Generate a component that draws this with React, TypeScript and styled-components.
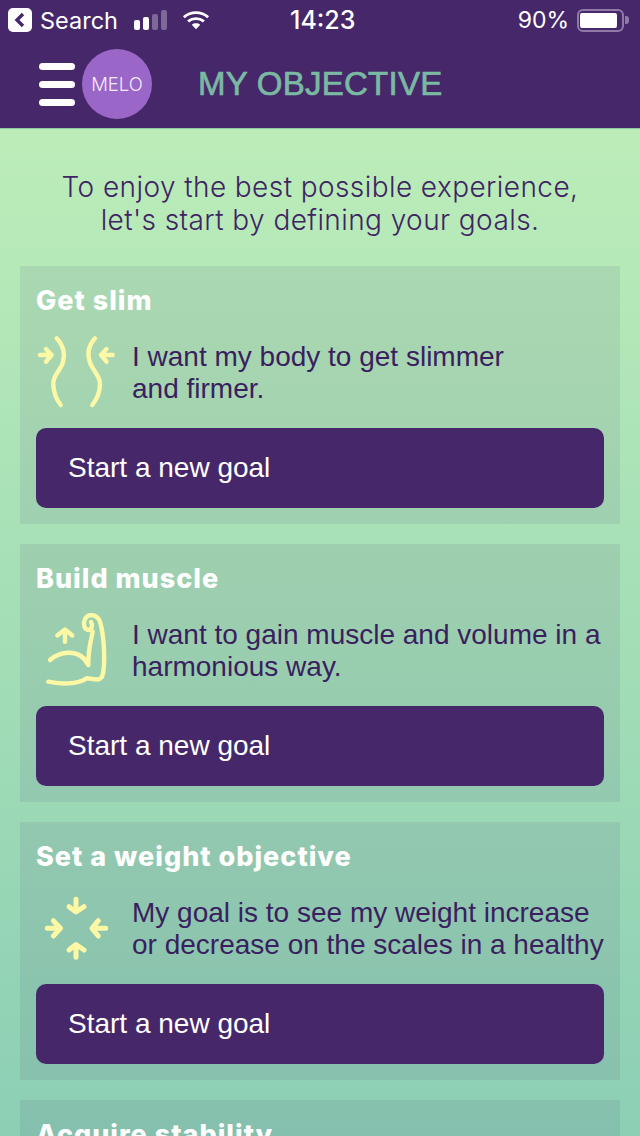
import { createGlobalStyle, styled } from "styled-components";

const GlobalStyle = createGlobalStyle`
  html, body {
    margin: 0;
    padding: 0;
    height: 1136px;
    overflow: hidden;
  }
  * { box-sizing: border-box; }
`;

const goals = [
  {
    title: "Get slim",
    text: ["I want my body to get slimmer", "and firmer."],
    icon: "slim",
  },
  {
    title: "Build muscle",
    text: ["I want to gain muscle and volume in a", "harmonious way."],
    icon: "muscle",
  },
  {
    title: "Set a weight objective",
    text: ["My goal is to see my weight increase", "or decrease on the scales in a healthy"],
    icon: "weight",
  },
];

function SlimIcon() {
  return (
    <GoalSvg viewBox="0 0 80 80">
      <path d="M20.7 6.3 C27 13 30 22 26 33 C22 41 17 44 17.3 52 C17.5 60 20 67 24.7 73" />
      <path d="M59 6.3 C53 13 50 22 55 33 C59 41 64 44 64 52 C64 60 61 67 56.3 73" />
      <path d="M4 23 H15.7 M10 17 L15.7 23 L10 29.7" />
      <path d="M76.7 23 H65 M70.5 17 L65 23 L70.5 29.7" />
    </GoalSvg>
  );
}

function MuscleIcon() {
  return (
    <GoalSvg viewBox="0 0 80 80">
      <path d="M12.3 71.7 C22 74 42 75 50.7 68.3 C56 68 62 72 66 67 C70 55 68 25 64 11.7 C61 4 52 3 49 9 C47 14 48 19 52 20 C56 20 57 15 55 12" />
      <path d="M56.7 21.7 C55 30 52 40 52.3 55 M14 50 C24 41 44 38 52.3 55" />
      <path d="M29 31.7 V20 M21.3 25.5 L29 19.5 L36.3 25.5" />
    </GoalSvg>
  );
}

function WeightIcon() {
  return (
    <GoalSvg $thick viewBox="0 0 80 80">
      <path d="M40 11.3 V23.7 M33 18.7 L40 24 L48 18.7" />
      <path d="M40 69.3 V57 M33 62 L40 56.5 L48 62" />
      <path d="M11.3 40.3 H24 M17.3 32.7 L24.5 40.3 L17.3 48" />
      <path d="M69.7 40.3 H56.7 M62.3 32.7 L56 40.3 L62.3 48" />
    </GoalSvg>
  );
}

const icons: Record<string, () => React.ReactElement> = {
  slim: SlimIcon,
  muscle: MuscleIcon,
  weight: WeightIcon,
};

export default function App() {
  return (
    <Page>
      <GlobalStyle />
      <Top>
        <StatusBar>
          <StatusLeft>
            <BackBadge>
              <svg width="24" height="24" viewBox="0 0 24 24">
                <path d="M15 6 L9 12 L15 18" fill="none" stroke="#46286a" strokeWidth="3.4" />
              </svg>
            </BackBadge>
            <span>Search</span>
            <Signal>
              <SignalBar $h={10} />
              <SignalBar $h={13} />
              <SignalBar $h={16} $dim />
              <SignalBar $h={20} $dim />
            </Signal>
            <svg width="28" height="21" viewBox="0 0 30 22">
              <path
                d="M2 7.5 C9.5 1 20.5 1 28 7.5 M6.5 12 C11.5 8 18.5 8 23.5 12"
                fill="none"
                stroke="#fff"
                strokeWidth="3"
              />
              <path d="M10.5 15.5 C13 13.4 17 13.4 19.5 15.5 L15 20.5 Z" fill="#fff" />
            </svg>
          </StatusLeft>
          <Clock>14:23</Clock>
          <StatusRight>
            <Percent>90%</Percent>
            <Battery>
              <BatteryFill />
            </Battery>
            <BatteryTip />
          </StatusRight>
        </StatusBar>
        <NavBar>
          <Burger>
            <span />
            <span />
            <span />
          </Burger>
          <Logo>MELO</Logo>
          <NavTitle>MY OBJECTIVE</NavTitle>
        </NavBar>
      </Top>
      <Main>
        <Intro>
          To enjoy the best possible experience,
          <br />
          let's start by defining your goals.
        </Intro>
        <Cards>
          {goals.map((goal) => {
            const Icon = icons[goal.icon];
            return (
              <Card key={goal.title}>
                <CardTitle>{goal.title}</CardTitle>
                <CardBody>
                  <IconSlot>
                    <Icon />
                  </IconSlot>
                  <CardText>
                    {goal.text[0]}
                    <br />
                    {goal.text[1]}
                  </CardText>
                </CardBody>
                <StartButton>Start a new goal</StartButton>
              </Card>
            );
          })}
          <Card>
            <CardTitle>Acquire stability</CardTitle>
          </Card>
        </Cards>
      </Main>
    </Page>
  );
}

const Page = styled.div`
  width: 640px;
  height: 1136px;
  overflow: hidden;
  display: flex;
  flex-direction: column;
  background: linear-gradient(180deg, #bcedb9 128px, #a5dfb6 600px, #8ccfb5 1136px);
`;

const Top = styled.header`
  height: 129px;
  flex: none;
  background: #46286a;
  color: #fff;
  border-bottom: 1px solid #8fc7a5;
`;

const StatusBar = styled.div`
  height: 40px;
  position: relative;
  display: flex;
  align-items: center;
  justify-content: space-between;
  padding: 0 11px 0 8px;
  font: 400 23.5px Inter, "Liberation Sans", sans-serif;
`;

const StatusLeft = styled.div`
  display: flex;
  align-items: center;
  gap: 8px;
`;

const BackBadge = styled.div`
  width: 24px;
  height: 24px;
  background: #fff;
  border-radius: 5px;
`;

const Signal = styled.div`
  display: flex;
  align-items: flex-end;
  gap: 3px;
  height: 20px;
  margin-left: 8px;
  margin-right: 7px;
`;

const SignalBar = styled.i<{ $h: number; $dim?: boolean }>`
  display: block;
  width: 6px;
  height: ${({ $h }) => $h}px;
  border-radius: 2px;
  background: ${({ $dim }) => ($dim ? "#7e6897" : "#fff")};
`;

const Clock = styled.div`
  position: absolute;
  left: 290px;
  top: 5px;
  font-size: 25px;
  font-weight: 500;
`;

const StatusRight = styled.div`
  display: flex;
  align-items: center;
  gap: 8px;
`;

const Percent = styled.span`
  font-size: 23px;
`;

const Battery = styled.div`
  width: 47px;
  height: 23px;
  padding: 2px 1px;
  border: 2px solid #8f7aa7;
  border-radius: 6px;
`;

const BatteryFill = styled.div`
  width: 37px;
  height: 100%;
  background: #fff;
  border-radius: 2px;
`;

const BatteryTip = styled.div`
  width: 4px;
  height: 8px;
  margin-left: -7px;
  background: #8f7aa7;
  border-radius: 0 3px 3px 0;
`;

const NavBar = styled.div`
  height: 88px;
  display: flex;
  align-items: center;
  padding: 0 0 0 39px;
`;

const Burger = styled.div`
  width: 36px;
  display: flex;
  flex-direction: column;
  gap: 11px;

  span {
    display: block;
    height: 7px;
    border-radius: 3.5px;
    background: #fff;
  }
`;

const Logo = styled.div`
  width: 70px;
  height: 70px;
  margin-left: 7px;
  border-radius: 50%;
  background: #9a66c8;
  display: flex;
  align-items: center;
  justify-content: center;
  font: 300 18.5px Inter, "Liberation Sans", sans-serif;
  color: #f4ecfa;
`;

const NavTitle = styled.h1`
  margin: 0 0 0 46px;
  font: 400 33px "Liberation Sans", Arial, sans-serif;
  color: #7ab9a2;
  -webkit-text-stroke: 0.7px #7ab9a2;
  letter-spacing: 0.25px;
`;

const Main = styled.main`
  display: flex;
  flex-direction: column;
  padding: 42px 20px 0;
`;

const Intro = styled.p`
  margin: 0;
  text-align: center;
  font: 350 28px/33px Inter, "Liberation Sans", sans-serif;
  color: #3f2464;
  letter-spacing: 0.42px;
`;

const Cards = styled.div`
  margin-top: 29px;
  display: flex;
  flex-direction: column;
  gap: 20px;
`;

const Card = styled.section`
  height: 258px;
  flex: none;
  padding: 17px 16px;
  background: rgba(70, 40, 106, 0.09);
`;

const CardTitle = styled.h2`
  margin: 0;
  font: 800 27px/36px Inter, "Liberation Sans", sans-serif;
  color: #fff;
  letter-spacing: 1px;
`;

const CardBody = styled.div`
  display: flex;
  align-items: center;
  height: 92px;
  margin-top: 7px;
`;

const IconSlot = styled.div`
  width: 96px;
  flex: none;
  display: flex;
  align-items: center;
`;

const GoalSvg = styled.svg<{ $thick?: boolean }>`
  width: 80px;
  height: 80px;
  fill: none;
  stroke: #fdf8a6;
  stroke-width: ${({ $thick }) => ($thick ? 5 : 4.4)};
  stroke-linecap: round;
  stroke-linejoin: round;
`;

const CardText = styled.p`
  margin: 0;
  padding-top: 1px;
  font: 400 28px/32px "Liberation Sans", Arial, sans-serif;
  color: #3a1f60;
  white-space: nowrap;
`;

const StartButton = styled.button`
  display: block;
  width: 100%;
  height: 80px;
  margin-top: 10px;
  padding: 0 32px;
  border: 0;
  border-radius: 10px;
  background: #46286a;
  color: #fff;
  text-align: left;
  font: 400 28px "Liberation Sans", Arial, sans-serif;
`;
